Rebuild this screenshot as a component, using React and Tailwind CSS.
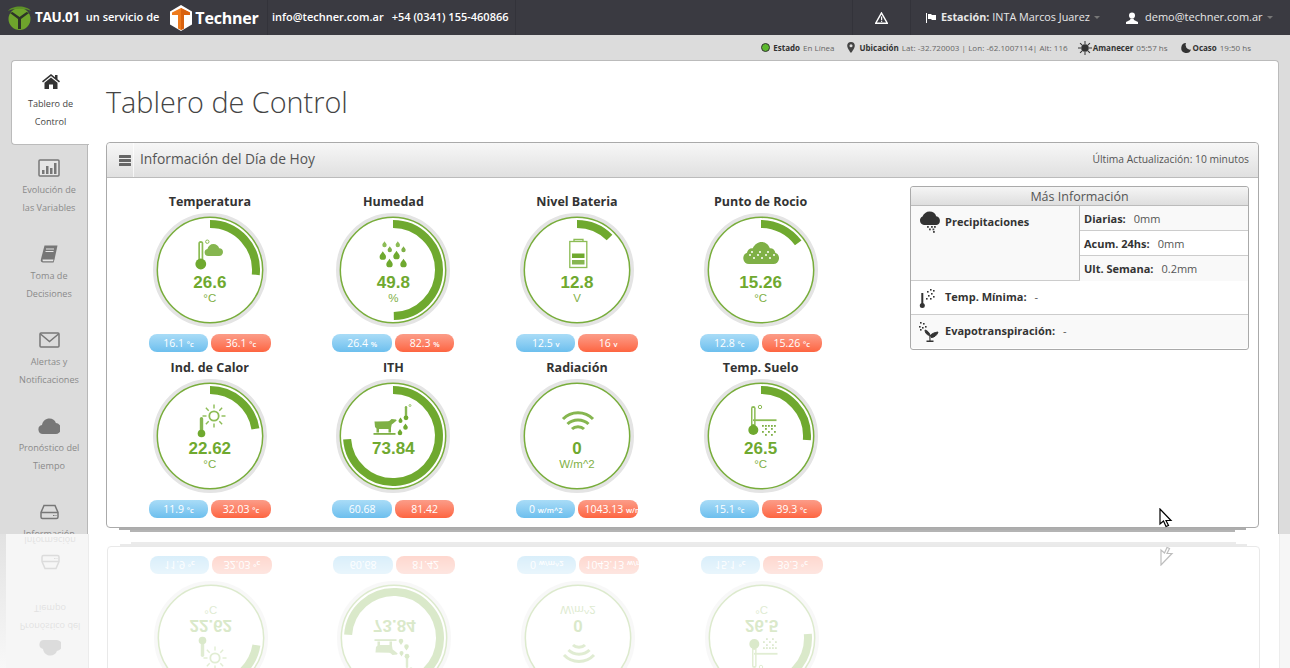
const green = '#6fa92f'

function Drop({ x, y, r, fill = green }) {
  return <path d={`M${x} ${y - r * 1.5}C${x + r * 0.5} ${y - r * 0.7} ${x + r} ${y - r * 0.3} ${x + r} ${y + r * 0.2}A${r} ${r} 0 0 1 ${x - r} ${y + r * 0.2}C${x - r} ${y - r * 0.3} ${x - r * 0.5} ${y - r * 0.7} ${x} ${y - r * 1.5}Z`} fill={fill} />
}

function TempCloudIcon() {
  return (
    <svg width="40" height="40" viewBox="0 0 40 40">
      <rect x="8.300" y="7" width="5" height="20" rx="2.500" fill="#8cbc55" />
      <rect x="10" y="9" width="1.600" height="16" fill="#fff" />
      <circle cx="10.800" cy="30" r="5.400" fill={green} />
      <circle cx="17.300" cy="7.700" r="1.700" fill="none" stroke="#8cbc55" />
      <path d="M18 22a3.600 3.600 0 0 1-.6-7.100c.8-3 3-5 6-5 2.800 0 5 1.700 5.800 4.300a4 4 0 0 1 3.800 3.900c0 2.200-1.600 3.900-3.800 3.900Z" fill="#86b650" />
    </svg>
  )
}

function DropsIcon() {
  return (
    <svg width="40" height="40" viewBox="0 0 40 40">
      <Drop x={11.500} y={10.500} r={2.200} fill="#8cbc55" />
      <Drop x={24.800} y={10.500} r={2.200} fill="#8cbc55" />
      <Drop x={16.800} y={15.500} r={2.200} fill="#7fb046" />
      <Drop x={30.500} y={15.500} r={2.200} fill="#7fb046" />
      <Drop x={9.800} y={22} r={3.200} />
      <Drop x={23.500} y={21.500} r={3.200} />
      <Drop x={16.500} y={29.500} r={3.200} />
      <Drop x={30.500} y={29.500} r={3.200} />
    </svg>
  )
}

function BatteryIcon() {
  return (
    <svg width="40" height="40" viewBox="0 0 40 40">
      <path d="M17 7V5.500h9V7" fill="none" stroke="#8cbc55" strokeWidth="1.300" />
      <rect x="12.800" y="7.500" width="17" height="26" fill="none" stroke="#8cbc55" strokeWidth="1.300" />
      <rect x="15" y="19.500" width="12.500" height="4.500" fill={green} />
      <rect x="15" y="26" width="12.500" height="4.500" fill="#86b650" />
    </svg>
  )
}

function DewCloudIcon() {
  const dots = [[9, 21], [13, 24], [17, 21], [21, 24], [25, 21], [29, 24], [33, 21], [11, 18], [19, 18], [27, 18]]
  return (
    <svg width="40" height="40" viewBox="0 0 40 40">
      <path d="M8 30a5.800 5.800 0 0 1-2-11.200c.4-3 3-5 5.800-4.600C13.500 10.500 17 8 20.500 8c4 0 7.300 2.700 8.300 6.300 2.800-.3 5.200 1.700 5.500 4.500a5.800 5.800 0 0 1-2 11.200Z" fill="#7fb046" />
      {dots.map(([x, y]) => <circle key={`${x}-${y}`} cx={x} cy={y} r="1" fill="#fff" />)}
    </svg>
  )
}

function HeatIcon() {
  const rays = [0, 45, 90, 135, 180, 225, 270, 315]
  return (
    <svg width="40" height="40" viewBox="0 0 40 40">
      <rect x="9.800" y="17" width="3.400" height="15" rx="1.700" fill="#86b650" />
      <circle cx="11.500" cy="33.500" r="3.800" fill={green} />
      <circle cx="24" cy="16" r="4.700" fill="none" stroke="#8cbc55" strokeWidth="1.800" />
      {rays.map((a) => <rect key={a} x="23.300" y="4.500" width="1.400" height="4" fill="#8cbc55" transform={`rotate(${a} 24 16)`} />)}
    </svg>
  )
}

function CowIcon() {
  return (
    <svg width="40" height="40" viewBox="0 0 40 40">
      <path d="M1.500 21.500h2.500l11-.3c1.500-.2 2.500-1.200 3.500-2.200l4.500.6 .7 1-3 2.400-2 1.500-.7 3.500v4.500h-2.500v-3.500h-9.500v3.500H3.500v-4l-1.500-1.500Z" fill="#7fb046" />
      <rect x="0.500" y="33" width="22" height="1.800" fill="#7fb046" />
      <rect x="31.800" y="6" width="2.400" height="11" rx="1.200" fill="#86b650" />
      <circle cx="33" cy="17.800" r="2.400" fill={green} />
      <circle cx="37" cy="5.500" r="1" fill="none" stroke="#8cbc55" strokeWidth=".8" />
      <Drop x={27.500} y={20.500} r={2} />
      <Drop x={32.500} y={27} r={2.300} />
      <Drop x={27} y={32.500} r={2.300} />
    </svg>
  )
}

function WifiIcon() {
  return (
    <svg width="40" height="40" viewBox="0 0 40 40">
      <g fill="none" stroke="#86b650" strokeWidth="3">
        <path d="M6 19c8-8.500 22-8.500 30 0" />
        <path d="M10.500 24c5.500-5.500 15.500-5.500 21 0" />
        <path d="M15 29c3-3 9-3 12 0" />
      </g>
    </svg>
  )
}

function SoilIcon() {
  const dots = []
  for (let r = 0; r < 4; r++) {
    for (let c = 0; c < 5; c++) {
      if ((r + c) % 2 === 0 || r === 0) dots.push([21 + c * 3, 25 + r * 3])
    }
  }
  return (
    <svg width="40" height="40" viewBox="0 0 40 40">
      <rect x="10" y="6" width="4.600" height="24" rx="2.300" fill="#8cbc55" />
      <rect x="11.500" y="8" width="1.600" height="16" fill="#fff" />
      <circle cx="12.300" cy="30" r="5" fill={green} />
      <circle cx="19" cy="7" r="1.700" fill="none" stroke="#8cbc55" />
      <rect x="12" y="19.300" width="23.500" height="1.800" fill="#8cbc55" />
      {dots.map(([x, y]) => <rect key={`${x}-${y}`} x={x} y={y} width="1.800" height="1.800" fill="#7fb046" />)}
    </svg>
  )
}

const gauges = [
  { title: 'Temperatura', value: '26.6', unit: '°C', angle: 96, Icon: TempCloudIcon, min: '16.1', max: '36.1', pill: '°c' },
  { title: 'Humedad', value: '49.8', unit: '%', angle: 179, Icon: DropsIcon, min: '26.4', max: '82.3', pill: '%' },
  { title: 'Nivel Bateria', value: '12.8', unit: 'V', angle: 45, Icon: BatteryIcon, min: '12.5', max: '16', pill: 'v' },
  { title: 'Punto de Rocio', value: '15.26', unit: '°C', angle: 54, Icon: DewCloudIcon, min: '12.8', max: '15.26', pill: '°c' },
  { title: 'Ind. de Calor', value: '22.62', unit: '°C', angle: 81, Icon: HeatIcon, min: '11.9', max: '32.03', pill: '°c' },
  { title: 'ITH', value: '73.84', unit: '', angle: 266, Icon: CowIcon, min: '60.68', max: '81.42', pill: '' },
  { title: 'Radiación', value: '0', unit: 'W/m^2', angle: 0, Icon: WifiIcon, min: '0', max: '1043.13', pill: 'w/m^2' },
  { title: 'Temp. Suelo', value: '26.5', unit: '°C', angle: 95, Icon: SoilIcon, min: '15.1', max: '39.3', pill: '°c' },
]

function arcPath(angle) {
  const r = 46
  const rad = (angle * Math.PI) / 180
  const x = 57 + r * Math.sin(rad)
  const y = 57 - r * Math.cos(rad)
  return `M57 11A${r} ${r} 0 ${angle > 180 ? 1 : 0} 1 ${x} ${y}`
}

function Pill({ value, unit, color }) {
  const tone = color === 'blue' ? 'from-[#a9dcf7] to-[#6cbfee]' : 'from-[#fb9c88] to-[#fd6440]'
  return (
    <div className={`w-[59.500px] h-[18px] rounded-[8px] bg-linear-to-b ${tone} text-white text-[10.500px] leading-[18px] text-center whitespace-nowrap px-[6px]`}>
      {value} <span className="text-[7.500px] font-semibold">{unit}</span>
    </div>
  )
}

function Gauge({ title, value, unit, angle, Icon, min, max, pill }) {
  return (
    <div className="h-[166px] flex flex-col items-center">
      <h3 className="h-[15px] mt-[2px] text-[12.500px] leading-[15px] font-bold text-[#333]">{title}</h3>
      <div className="relative mt-[4px] w-[114px] h-[114px]">
        <svg className="absolute inset-0" width="114" height="114" viewBox="0 0 114 114">
          <circle cx="57" cy="57" r="55" fill="#fff" stroke="#e4e4e4" strokeWidth="4" />
          <circle cx="57" cy="57" r="52.700" fill="none" stroke="#78ad3b" strokeWidth="1.500" />
          {angle > 0 && <path d={arcPath(angle)} fill="none" stroke={green} strokeWidth="8" />}
        </svg>
        <div className="relative flex flex-col items-center pt-[21px]">
          <Icon />
          <div className="h-[18px] leading-[18px] text-[17px] font-bold text-[#6fa92f] font-['Liberation_Sans',sans-serif]">{value}</div>
          <div className="h-[14px] -mt-[1px] leading-[14px] text-[11.500px] text-[#7fb046] font-['Liberation_Sans',sans-serif]">{unit}</div>
        </div>
      </div>
      <div className="mt-[7px] flex gap-[3px]">
        <Pill value={min} unit={pill} color="blue" />
        <Pill value={max} unit={pill} color="red" />
      </div>
    </div>
  )
}

function HomeIcon() {
  return (
    <svg width="18" height="15" viewBox="0 0 18 15" fill="#333">
      <path d="M9 0 13 3.200V1h2.500v4.200L18 7.300 17 8.500 9 2 1 8.500 0 7.300Z" />
      <path d="M9 3.500 15.500 8.800V15H11v-4.500H7V15H2.500V8.800Z" />
    </svg>
  )
}
function ChartIcon() {
  return (
    <svg width="22" height="18" viewBox="0 0 22 18">
      <rect x="1" y="1" width="20" height="16" rx="1" fill="#e6e6e6" stroke="#777" strokeWidth="1.500" />
      <g fill="#777"><rect x="4" y="11" width="2.500" height="4" /><rect x="8" y="7" width="2.500" height="8" /><rect x="12" y="9" width="2.500" height="6" /><rect x="16" y="4" width="2.500" height="11" /></g>
    </svg>
  )
}
function BookIcon() {
  return (
    <svg width="18" height="18" viewBox="0 0 18 18">
      <path d="M4.500 0.500H17.500L14.500 14.500 13.500 17.500H3C1 17.500 0.500 16 1 14Z" fill="#777" />
      <path d="M2.500 14.500H13.500L13 16.300H2.800Z" fill="#e6e6e6" />
      <path d="M6 4h8M5.500 6.500h8" stroke="#e6e6e6" />
    </svg>
  )
}
function MailIcon() {
  return (
    <svg width="21" height="16" viewBox="0 0 21 16" fill="none" stroke="#777" strokeWidth="1.500">
      <rect x="1" y="1" width="19" height="14" rx="1" />
      <path d="M1.500 2 10.500 9.500 19.500 2" />
    </svg>
  )
}
function CloudIcon() {
  return (
    <svg width="22" height="16" viewBox="0 0 22 16" fill="#777">
      <path d="M5 16A4.500 4.500 0 0 1 4 7.100C4.600 3 7.700 0.500 11.500 0.500c3 0 5.500 1.700 6.400 4.500A5.500 5.500 0 0 1 17 16Z" />
    </svg>
  )
}
function DriveIcon() {
  return (
    <svg width="19" height="16" viewBox="0 0 19 16" fill="none" stroke="#777" strokeWidth="1.500">
      <path d="M4 1.500h11l3 7v4.500a1.500 1.500 0 0 1-1.500 1.500h-14A1.500 1.500 0 0 1 1 13V8.500Z" />
      <path d="M1 8.500h17" />
      <path d="M13 11.500h1.500M15.500 11.500h1" strokeWidth="1.200" />
    </svg>
  )
}

const navItems = [
  { lines: ['Tablero de', 'Control'], Icon: HomeIcon, active: true },
  { lines: ['Evolución de', 'las Variables'], Icon: ChartIcon },
  { lines: ['Toma de', 'Decisiones'], Icon: BookIcon },
  { lines: ['Alertas y', 'Notificaciones'], Icon: MailIcon },
  { lines: ['Pronóstico del', 'Tiempo'], Icon: CloudIcon },
  { lines: ['Información'], Icon: DriveIcon },
]

function Sidebar() {
  return (
    <aside className="w-[77px] shrink-0 border-r border-[#b8b8b8]">
      {navItems.map(({ lines, Icon, active }) => (
        <div key={lines[0]} className={`flex flex-col items-center text-[9.100px] leading-[18px] ${active ? 'relative -mr-[2px] h-[85px] mb-[1px] bg-white text-[#444] rounded-l-[4px] border border-r-0 border-[#bbb]' : 'h-[86px] text-[#8a8a8a]'}`}>
          <div className={`h-[15px] flex items-center justify-center ${active ? 'mt-[13px] mb-[6px]' : 'mt-[14px] mb-[6px]'}`}><Icon /></div>
          {lines.map((l) => <span key={l}>{l}</span>)}
        </div>
      ))}
    </aside>
  )
}

function RainCloud() {
  return (
    <svg width="22" height="22" viewBox="0 0 22 22" fill="#333">
      <path d="M5 14A4.500 4.500 0 0 1 3.500 5.500C4.500 2.500 7.500 .5 10.500 .5c3.500 0 6 2 6.700 4.700a4.500 4.500 0 0 1 .3 8.800Z" />
      {[[8, 15], [12, 15], [15, 15], [10, 17.500], [13.500, 17.500], [14, 20]].map(([x, y]) => <rect key={`${x}-${y}`} x={x} y={y} width="1.800" height="1.800" fill="#444" />)}
    </svg>
  )
}
function ThermoDots() {
  return (
    <svg width="22" height="22" viewBox="0 0 22 22" fill="#333">
      <rect x="3.300" y="6" width="2" height="12" />
      <circle cx="4.300" cy="18.500" r="2.500" />
      {[[9, 4], [12, 2], [15, 3], [10, 8], [13, 6], [15, 9], [12, 11], [8, 11]].map(([x, y]) => <rect key={`${x}-${y}`} x={x} y={y} width="1.600" height="1.600" />)}
    </svg>
  )
}
function PlantIcon() {
  return (
    <svg width="22" height="22" viewBox="0 0 22 22" fill="#333">
      <path d="M12 21v-7C11 11 9 9.500 7 9c0 3 2 5 4.500 5.500M12 15c1-2 4-3.500 8-4-1 3.500-4 5.500-7 5.500" stroke="#333" strokeWidth="1" />
      <rect x="8.500" y="19.500" width="7" height="1.500" />
      {[[2, 1], [5, 2], [1, 5], [4, 6], [7, 5], [2, 8]].map(([x, y]) => <rect key={`${x}-${y}`} x={x} y={y} width="1.600" height="1.600" />)}
    </svg>
  )
}

function SubRow({ label, value, bg }) {
  return (
    <div className={`h-[25px] flex items-center pl-[4px] pt-[2px] gap-[8px] ${bg} border-b border-[#ccc] last:border-b-0`}>
      <b className="text-[#333]">{label}</b><span>{value}</span>
    </div>
  )
}

function MoreInfo() {
  return (
    <div className="mt-[8px] w-[339px] h-[164px] border border-[#aaa] rounded-[3px] text-[11px] text-[#555]">
      <div className="h-[19px] leading-[19px] text-center text-[12.500px] bg-linear-to-b from-[#f5f5f5] to-[#dedede] border-b border-[#bbb] rounded-t-[3px]">Más Información</div>
      <div className="flex h-[75px] border-b border-[#ccc]">
        <div className="w-[169px] bg-[#f9f9f9] border-r border-[#bbb] flex items-start gap-[4px] pl-[8px] pt-[5px]">
          <RainCloud /><b className="text-[#333] mt-[3px]">Precipitaciones</b>
        </div>
        <div className="flex-1">
          <SubRow label="Diarias:" value="0mm" bg="bg-[#f9f9f9]" />
          <SubRow label="Acum. 24hs:" value="0mm" bg="bg-white" />
          <SubRow label="Ult. Semana:" value="0.2mm" bg="bg-[#f9f9f9]" />
        </div>
      </div>
      <div className="h-[34px] flex items-center gap-[5px] pl-[7px] border-b border-[#ccc]">
        <ThermoDots /><b className="text-[#333]">Temp. Mínima:</b><span className="ml-[3px]">-</span>
      </div>
      <div className="h-[33px] flex items-center gap-[5px] pl-[7px] bg-[#f9f9f9] rounded-b-[3px]">
        <PlantIcon /><b className="text-[#333]">Evapotranspiración:</b><span className="ml-[3px]">-</span>
      </div>
    </div>
  )
}

function TauLogo() {
  return (
    <svg width="25" height="26" viewBox="0 0 25 26">
      <circle cx="12.500" cy="14" r="11" fill="#6ea32c" />
      <path d="M1 6C5 0 20 0 24 6 19 3 6 3 1 6Z" fill="#5d9127" />
      <path d="M3 8 11 14V24H14V14L22 8 19.500 7 12.500 12 5.500 7Z" fill="#2d3328" />
    </svg>
  )
}
function TechnerLogo() {
  return (
    <svg width="22" height="26" viewBox="0 0 22 26">
      <path d="M11 0 22 6.500V19.500L11 26 0 19.500V6.500Z" fill="#fff" />
      <path d="M11 3 20 7.500V10H14V23.500L11 25 8 23.500V10H2V7.500Z" fill="#ee7a1d" />
      <path d="M11 3 20 7.500V10H14V23.500L11 25Z" fill="#d9620f" />
    </svg>
  )
}

function TopBar() {
  return (
    <header className="h-[35px] bg-[#3a3a41] flex items-center text-white text-[12px]">
      <div className="pl-[7px] flex items-center h-full w-[268px] border-r border-[#33333a] whitespace-nowrap">
        <TauLogo />
        <span className="ml-[3px] font-bold text-[13.500px] tracking-[-0.3px]">TAU.01</span>
        <span className="ml-[6px] text-[11px] font-semibold">un servicio de</span>
        <span className="ml-[11px]"><TechnerLogo /></span>
        <span className="ml-[3px] text-[16px] font-bold tracking-[-0.2px]">Techner</span>
      </div>
      <div className="h-full w-[248px] border-r border-[#33333a] flex items-center pl-[4px] gap-[8px] text-[11px] font-semibold whitespace-nowrap">
        <span>info@techner.com.ar</span>
        <span>+54 (0341) 155-460866</span>
      </div>
      <div className="ml-[336px] h-full w-[59px] border-x border-[#33333a] flex items-center justify-center">
        <svg width="13" height="12" viewBox="0 0 13 12">
          <path d="M6.500 1 12.300 11.200H.7Z" fill="none" stroke="#fff" strokeWidth="1.500" />
          <rect x="6" y="4.500" width="1.200" height="3.500" fill="#fff" /><rect x="6" y="8.700" width="1.200" height="1.200" fill="#fff" />
        </svg>
      </div>
      <div className="flex items-center pl-[15px] w-[215px] text-[#e8e8e8] text-[10.800px] whitespace-nowrap">
        <svg width="10" height="10" viewBox="0 0 10 10" fill="#fff" className="mr-[5px]"><path d="M0 0h1v10H0ZM2 1h3l1 1h4v5H6L5 6H2Z" /></svg>
        <b className="mr-[3px]">Estación:</b>INTA Marcos Juarez
        <span className="ml-[4px] border-x-[3px] border-t-[3px] border-x-transparent border-t-[#777]" />
      </div>
      <div className="flex items-center w-[164px] text-[#e8e8e8] text-[11px] whitespace-nowrap">
        <svg width="12" height="12" viewBox="0 0 12 12" fill="#fff" className="mr-[7px]"><circle cx="6" cy="3.500" r="3" /><path d="M4.500 6.500h3L8 8l4 2v2H0v-2l4-2Z" /></svg>
        demo@techner.com.ar
        <span className="ml-[4px] border-x-[3px] border-t-[3px] border-x-transparent border-t-[#777]" />
      </div>
    </header>
  )
}

function StatusBar() {
  return (
    <div className="h-[25px] flex items-center justify-end pr-[39px] text-[8px] text-[#666] whitespace-nowrap">
      <span className="w-[9px] h-[9px] rounded-full bg-[#5cb82e] border border-[#333] mr-[3px]" />
      <b className="text-[#333] mr-[3px]">Estado</b>En Línea
      <svg width="8" height="11" viewBox="0 0 8 11" className="ml-[12px] mr-[5px]"><path d="M4 0a3.800 3.800 0 0 1 3.800 3.800C7.800 6.500 4 11 4 11S.2 6.500.2 3.800A3.800 3.800 0 0 1 4 0Z" fill="#444" /><circle cx="4" cy="3.800" r="1.500" fill="#ddd" /></svg>
      <b className="text-[#333] mr-[3px]">Ubicación</b><span className="tracking-[0.05px]">Lat: -32.720003 | Lon: -62.1007114| Alt: 116</span>
      <svg width="14" height="14" viewBox="0 0 14 14" fill="#333" className="ml-[10px] mr-[1px]"><circle cx="7" cy="7" r="3.800" />{[0, 45, 90, 135, 180, 225, 270, 315].map((a) => <rect key={a} x="6.500" y="0" width="1" height="3" transform={`rotate(${a} 7 7)`} />)}</svg>
      <b className="text-[#333] mr-[3px]">Amanecer</b>05:57 hs
      <svg width="12" height="12" viewBox="0 0 12 12" className="ml-[12px] mr-[1px]"><path d="M6 1a5 5 0 1 0 5 6.500A4.500 4.500 0 0 1 6 1Z" fill="#333" /></svg>
      <b className="text-[#333] mr-[3px]">Ocaso</b>19:50 hs
    </div>
  )
}

function Page() {
  return (
    <div className="w-[1290px] h-[668px] overflow-hidden bg-[#dcdcdc] font-['Open_Sans',sans-serif] flex flex-col relative">
      <TopBar />
      <StatusBar />
      <div className="flex flex-1 pl-[11px] pr-[11px] min-h-0">
        <Sidebar />
        <main className="flex-1 min-w-0 bg-white border-t border-r border-[#bbb] rounded-tr-[4px] pl-[18px] pr-[19px]">
          <h1 className="h-[81px] flex items-center text-[28.800px] font-light text-[#444]">Tablero de Control</h1>
          <section className="h-[386px] border border-[#aaa] rounded-[4px] bg-white shadow-[0_15px_0_-13px_#adadad,0_28px_0_-24px_#b4b4b4]">
            <div className="h-[35px] flex items-center justify-between pl-[12px] pr-[9px] bg-linear-to-b from-[#f7f7f7] to-[#e0e0e0] border-b border-[#bbb] rounded-t-[4px]">
              <div className="flex items-center h-full text-[13.800px] text-[#555]">
                <svg width="12" height="11" viewBox="0 0 12 11" fill="#666" className="mr-[2px]"><rect width="12" height="3" rx=".5" /><rect y="4" width="12" height="3" rx=".5" /><rect y="8" width="12" height="3" rx=".5" /></svg>
                <span className="w-px h-full bg-white/70 mr-[6px]" />
                <span className="pb-[1px]">Información del Día de Hoy</span>
              </div>
              <span className="text-[10.300px] text-[#555]">Última Actualización: 10 minutos</span>
            </div>
            <div className="flex pl-[11px] pr-[9px] justify-between">
              <div className="grid grid-cols-[repeat(4,183.600px)] mt-[14px]">
                {gauges.map((g) => <Gauge key={g.title} {...g} />)}
              </div>
              <MoreInfo />
            </div>
          </section>
        </main>
      </div>
      <svg width="14" height="20" viewBox="0 0 14 20" className="absolute left-[1159px] top-[508px]">
        <path d="M1 1V16L4.500 13 7 18.500 9.500 17.500 7 12.500H12Z" fill="#fff" stroke="#000" strokeWidth="1.200" />
      </svg>
    </div>
  )
}

export default function App() {
  return (
    <div className="relative w-[1290px] h-[668px] overflow-hidden">
      <Page />
      {/* floor reflection */}
      <div className="absolute left-0 top-[534px] w-[6px] h-[134px] bg-linear-to-b from-[#e2e2e2] to-[#f8f8f8]" />
      <div className="absolute left-[6px] top-[534px] w-[1284px] h-[134px] overflow-hidden bg-white" aria-hidden="true">
        <div className="absolute left-[-5px] top-[-534px] origin-[0_537px] -scale-y-100 opacity-25">
          <Page />
        </div>
      </div>
    </div>
  )
}
